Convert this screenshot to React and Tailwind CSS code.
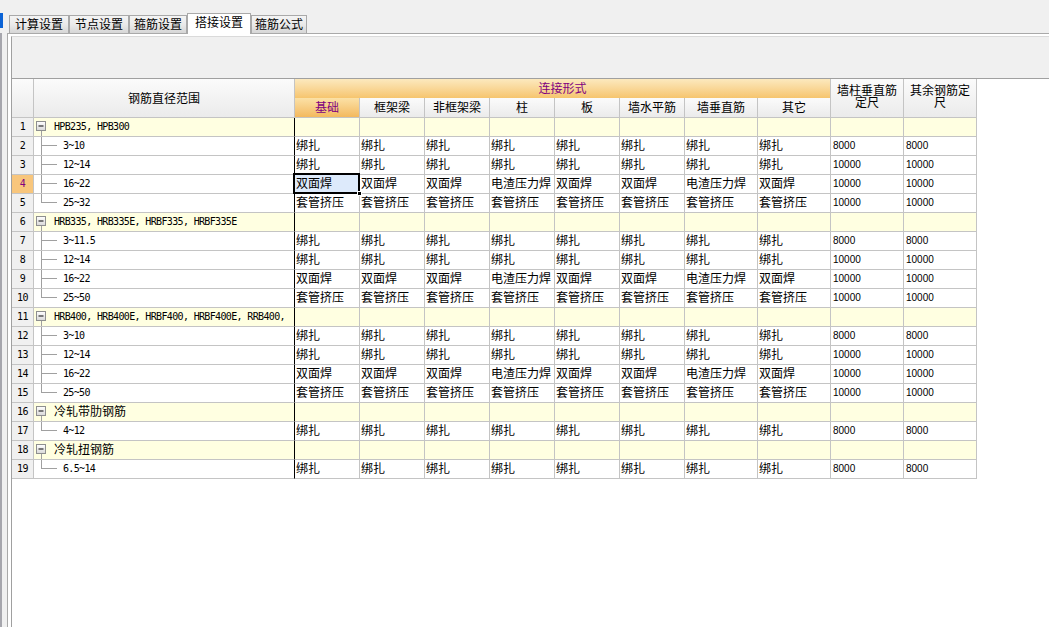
import React from "react";

const cjk = "[font-family:Liberation_Sans,Noto_Sans_CJK_SC,sans-serif]";
const mono = "[font-family:DejaVu_Sans_Mono,Noto_Sans_CJK_SC,monospace]";
const num = "[font-family:Liberation_Sans,sans-serif]";

const tie = Array(8).fill("绑扎");
const weld = ["双面焊", "双面焊", "双面焊", "电渣压力焊", "双面焊", "双面焊", "电渣压力焊", "双面焊"];
const sleeve = Array(8).fill("套管挤压");

const rows = [
  { group: "HPB235, HPB300" },
  { label: "3~10", vals: tie, len: "8000" },
  { label: "12~14", vals: tie, len: "10000" },
  { label: "16~22", vals: weld, len: "10000", active: true },
  { label: "25~32", vals: sleeve, len: "10000", last: true },
  { group: "HRB335, HRB335E, HRBF335, HRBF335E" },
  { label: "3~11.5", vals: tie, len: "8000" },
  { label: "12~14", vals: tie, len: "10000" },
  { label: "16~22", vals: weld, len: "10000" },
  { label: "25~50", vals: sleeve, len: "10000", last: true },
  { group: "HRB400, HRB400E, HRBF400, HRBF400E, RRB400," },
  { label: "3~10", vals: tie, len: "8000" },
  { label: "12~14", vals: tie, len: "10000" },
  { label: "16~22", vals: weld, len: "10000" },
  { label: "25~50", vals: sleeve, len: "10000", last: true },
  { group: "冷轧带肋钢筋", cn: true },
  { label: "4~12", vals: tie, len: "8000", last: true },
  { group: "冷轧扭钢筋", cn: true },
  { label: "6.5~14", vals: tie, len: "8000", last: true },
];

const colW = ["w-[65px]", "w-[65px]", "w-[65px]", "w-[65px]", "w-[65px]", "w-[65px]", "w-[73px]", "w-[73px]"];
const subHeads = ["基础", "框架梁", "非框架梁", "柱", "板", "墙水平筋", "墙垂直筋", "其它"];

const tabs = [
  { t: "计算设置", w: "w-[60px]" },
  { t: "节点设置", w: "w-[60px]" },
  { t: "箍筋设置", w: "w-[58px]" },
  { t: "搭接设置", w: "w-[64px]", on: true },
  { t: "箍筋公式", w: "w-[56px]" },
];

function GroupBox() {
  return (
    <svg width="20" height="18" className="shrink-0">
      <defs>
        <linearGradient id="bx" x1="0" y1="0" x2="0" y2="1">
          <stop offset="0" stopColor="#ffffff" />
          <stop offset="1" stopColor="#d8d8d8" />
        </linearGradient>
      </defs>
      <line x1="7.5" y1="13" x2="7.5" y2="18" stroke="#a0a0a0" />
      <rect x="2.5" y="3.5" width="9" height="9" fill="url(#bx)" stroke="#8e8f8f" />
      <line x1="4.5" y1="8" x2="9.5" y2="8" stroke="#2b2b2b" strokeWidth="1.2" />
    </svg>
  );
}

function TreeLine({ last }) {
  return (
    <svg width="29" height="18" className="shrink-0">
      <line x1="7.5" y1="0" x2="7.5" y2={last ? 9 : 18} stroke="#a0a0a0" />
      <line x1="7.5" y1="8.5" x2="23" y2="8.5" stroke="#a0a0a0" />
    </svg>
  );
}

function Row({ r, i }) {
  const bg = r.group ? "bg-[#ffffe1]" : "bg-white";
  return (
    <div className="flex h-[19px]">
      <div
        className={`w-[22px] shrink-0 flex items-center justify-center border-r border-b border-[#c4c4c4] text-[10px] tracking-[-0.6px] leading-none ${mono} ${
          r.active ? "bg-[#f8c67c] text-[#800080]" : "bg-[#f0f0f0] text-black"
        }`}
      >
        {i + 1}
      </div>
      <div className={`w-[261px] shrink-0 flex items-center border-b border-r border-b-[#c4c4c4] border-r-black ${bg}`}>
        {r.group ? (
          <>
            <GroupBox />
            {r.cn ? (
              <span className={`text-[12px] leading-none ${cjk}`}>{r.group}</span>
            ) : (
              <span className={`text-[10px] tracking-[-0.65px] leading-none whitespace-pre ${mono}`}>{r.group}</span>
            )}
          </>
        ) : (
          <>
            <TreeLine last={r.last} />
            <span className={`text-[10px] tracking-[-0.65px] leading-none ${mono}`}>{r.label}</span>
          </>
        )}
      </div>
      {colW.map((w, k) => {
        const sel = r.active && k === 0;
        return (
          <div
            key={k}
            className={`${w} shrink-0 relative flex items-center pl-[1px] border-r border-b border-[#c4c4c4] text-[12px] leading-none whitespace-nowrap ${cjk} ${
              sel ? "bg-[#ddeafb]" : bg
            }`}
          >
            {r.vals ? r.vals[k] : ""}
            {sel && (
              <div className="absolute -left-[2px] -top-[2px] -right-[1px] -bottom-[1px] z-10 border-2 border-black">
                <div className="absolute -right-[4px] -bottom-[4px] w-[5px] h-[5px] bg-black border border-white" />
              </div>
            )}
          </div>
        );
      })}
      {[0, 1].map((k) => (
        <div
          key={k}
          className={`w-[73px] shrink-0 flex items-center pl-[2px] border-r border-b border-[#c4c4c4] text-[10px] leading-none ${num} ${bg}`}
        >
          {r.len || ""}
        </div>
      ))}
    </div>
  );
}

export default function App() {
  return (
    <div className={`w-[1049px] h-[627px] overflow-hidden bg-[#f0f0f0] flex text-black ${cjk}`}>
      <div className="w-[7px] shrink-0 flex flex-col">
        <div className="h-[13px]" />
        <div className="h-[15px] w-[3px] bg-[#0b63d6]" />
        <div className="h-[5px]" />
        <div className="flex-1 border-l-2 border-[#a6a6ad]" />
      </div>
      <div className="flex-1 flex flex-col min-w-0">
        <div className="h-[33px] flex items-end pl-[2px] shrink-0">
          {tabs.map((t) =>
            t.on ? (
              <div
                key={t.t}
                className={`${t.w} h-[21px] -mb-px relative z-10 flex items-center justify-center bg-white border border-b-0 border-[#a9a9a9] text-[12px] leading-none pb-[2px]`}
              >
                {t.t}
              </div>
            ) : (
              <div
                key={t.t}
                className={`${t.w} h-[18px] flex items-center justify-center bg-linear-to-b from-[#f4f4f4] via-[#eaeaea] to-[#d6d6d6] border border-b-0 border-[#a9a9a9] text-[12px] leading-none`}
              >
                {t.t}
              </div>
            )
          )}
        </div>
        <div className="flex-1 flex flex-col bg-white border-t border-l border-[#a9a9a9] pl-[3px] pt-[2px] min-h-0">
          <div className="flex-1 flex flex-col border-l border-l-[#a0a0a0] border-t border-t-[#dadada] min-h-0">
            <div className="h-[41px] shrink-0 bg-[#f0f0f0]" />
            <div className="flex-1 bg-white border-t border-[#a0a0a0]">
              <div className="flex h-[39px]">
                <div className="w-[22px] shrink-0 border-r border-b border-[#c4c4c4] bg-linear-to-b from-[#fbfbfb] to-[#ebebeb]" />
                <div className="w-[261px] shrink-0 flex items-center justify-center pt-[2px] border-r border-b border-[#c4c4c4] bg-linear-to-b from-[#fbfbfb] to-[#ebebeb] text-[12px] leading-none">
                  钢筋直径范围
                </div>
                <div className="w-[536px] shrink-0 flex flex-col">
                  <div className="h-[19px] flex items-center justify-center border-r border-[#c4c4c4] bg-linear-to-b from-[#fce9be] to-[#f6c56e] text-[#800080] text-[12px] leading-none">
                    连接形式
                  </div>
                  <div className="flex h-[20px]">
                    {subHeads.map((h, k) => (
                      <div
                        key={h}
                        className={`${colW[k]} shrink-0 flex items-center justify-center border-r border-b border-[#c4c4c4] text-[12px] leading-none ${
                          k === 0
                            ? "bg-linear-to-b from-[#fbe1a6] to-[#f3b95d] text-[#800080]"
                            : "bg-linear-to-b from-[#fbfbfb] to-[#ebebeb]"
                        }`}
                      >
                        {h}
                      </div>
                    ))}
                  </div>
                </div>
                <div className="w-[73px] shrink-0 flex items-center justify-center text-center pb-[2px] border-r border-b border-[#c4c4c4] bg-linear-to-b from-[#fbfbfb] to-[#ebebeb] text-[12px] leading-[12px]">
                  墙柱垂直筋
                  <br />
                  定尺
                </div>
                <div className="w-[73px] shrink-0 flex items-center justify-center text-center pb-[2px] border-r border-b border-[#c4c4c4] bg-linear-to-b from-[#fbfbfb] to-[#ebebeb] text-[12px] leading-[12px]">
                  其余钢筋定
                  <br />
                  尺
                </div>
              </div>
              {rows.map((r, i) => (
                <Row key={i} r={r} i={i} />
              ))}
            </div>
          </div>
        </div>
      </div>
    </div>
  );
}
